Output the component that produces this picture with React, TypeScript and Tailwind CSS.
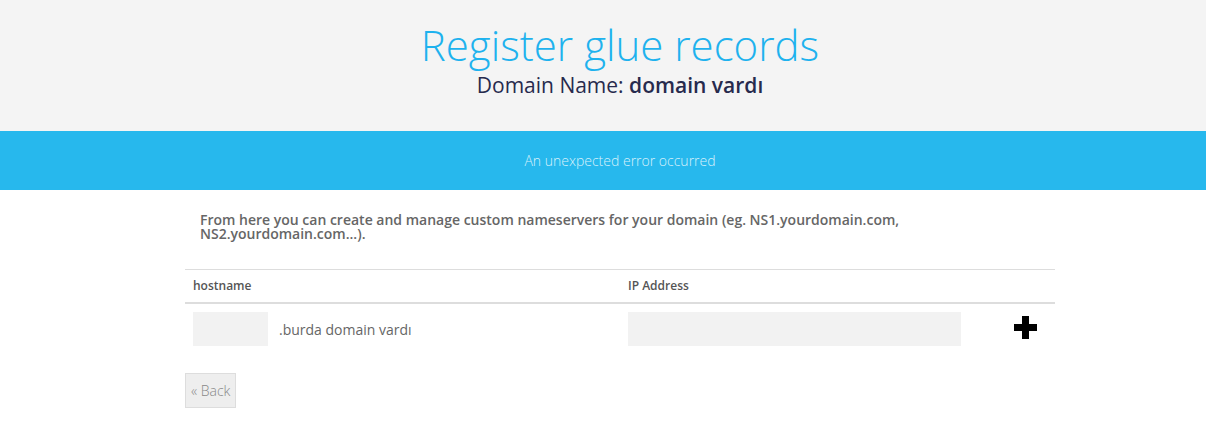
import React from "react";

export default function App() {
  return (
    <div className="w-[1206px] h-[430px] bg-white overflow-hidden" style={{ fontFamily: '"Open Sans", sans-serif' }}>
      <div className="w-[1240px]">
        <div className="h-[131px] bg-[#f4f4f4] flex flex-col items-center pt-[22px]">
          <h1 className="text-[42px] leading-[46px] font-light text-[#1eb2ee]">Register glue records</h1>
          <div className="mt-[4px] text-[21px] leading-[26px] text-[#272a4d]">
            Domain Name: <span className="font-semibold">domain vardı</span>
          </div>
        </div>
        <div className="h-[59px] bg-[#27b8ed] flex items-center justify-center">
          <span className="text-[14px] font-light text-[#d8f1fb]">An unexpected error occurred</span>
        </div>
        <div className="w-[870px] mx-auto">
          <p className="mt-[23px] px-[15px] text-[14px] leading-[14px] font-semibold text-[#666]">
            From here you can create and manage custom nameservers for your domain (eg. NS1.yourdomain.com, NS2.yourdomain.com...).
          </p>
          <div className="mt-[28px] border-t border-[#ddd]">
            <div className="flex h-[34px] items-center border-b-2 border-[#ddd] text-[12px] font-semibold text-[#555]">
              <div className="w-[435px] pl-[8px]">hostname</div>
              <div className="pl-[8px]">IP Address</div>
            </div>
            <div className="flex items-center pt-[8px] pb-[8px]">
              <div className="w-[435px] pl-[8px] flex items-center">
                <div className="w-[75px] h-[34px] bg-[#f2f2f2]" />
                <span className="ml-[11px] text-[14px] text-[#666]">.burda domain vardı</span>
              </div>
              <div className="pl-[8px]">
                <div className="w-[333px] h-[34px] bg-[#f2f2f2]" />
              </div>
              <div className="flex-1 flex justify-center">
                <svg width="23" height="23" viewBox="0 0 23 23" className="ml-[34px] mt-[-4px]">
                  <path d="M8 0h7v8h8v7h-8v8H8v-8H0V8h8z" fill="#000" />
                </svg>
              </div>
            </div>
          </div>
          <button className="mt-[19px] h-[35px] px-[5px] bg-[#eee] border border-[#ddd] text-[14px] font-light text-[#888]">
            « Back
          </button>
        </div>
      </div>
    </div>
  );
}
